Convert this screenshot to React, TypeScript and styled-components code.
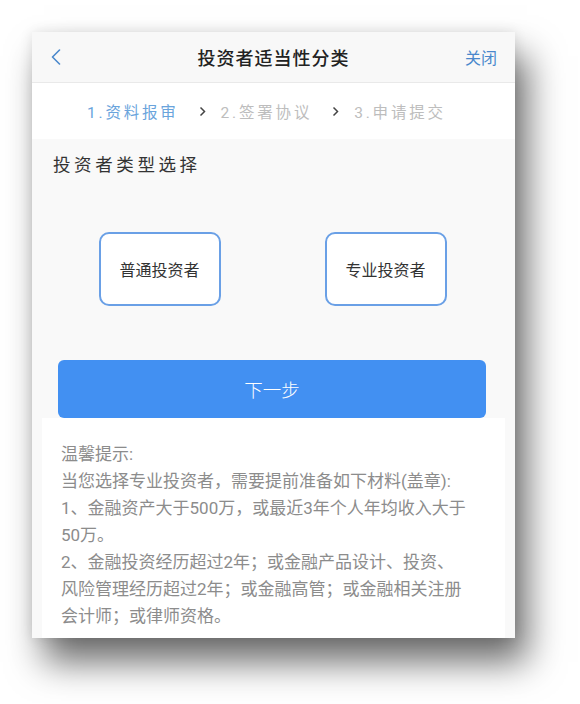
import styled, { createGlobalStyle } from "styled-components";

const GlobalStyle = createGlobalStyle`
  html, body {
    margin: 0;
    padding: 0;
    background: #ffffff;
  }
  body {
    font-family: Roboto, "Noto Sans CJK SC", sans-serif;
  }
`;

const steps = ["1.资料报审", "2.签署协议", "3.申请提交"];
const investorTypes = ["普通投资者", "专业投资者"];

export default function App() {
  return (
    <Page>
      <GlobalStyle />
      <Card>
        <Header>
          <BackButton aria-label="返回">
            <svg width="10" height="16" viewBox="0 0 10 16">
              <path
                d="M8.5 1 L1.5 8 L8.5 15"
                fill="none"
                stroke="#4a88cc"
                strokeWidth="1.6"
                strokeLinecap="round"
                strokeLinejoin="round"
              />
            </svg>
          </BackButton>
          <Title>投资者适当性分类</Title>
          <CloseLink>关闭</CloseLink>
        </Header>

        <StepBar>
          {steps.map((step, i) => (
            <StepItem key={step}>
              {i > 0 && (
                <StepArrow width="7" height="11" viewBox="0 0 7 11">
                  <path
                    d="M1.5 1.5 L5.5 5.5 L1.5 9.5"
                    fill="none"
                    stroke="#444"
                    strokeWidth="1.5"
                  />
                </StepArrow>
              )}
              <StepLabel active={i === 0}>{step}</StepLabel>
            </StepItem>
          ))}
        </StepBar>

        <Body>
          <SectionTitle>投资者类型选择</SectionTitle>
          <ChoiceRow>
            {investorTypes.map((t) => (
              <ChoiceBox key={t}>{t}</ChoiceBox>
            ))}
          </ChoiceRow>
          <NextButton>下一步</NextButton>
          <Tips>
            <TipText>
              <p>温馨提示:</p>
              <p>当您选择专业投资者，需要提前准备如下材料(盖章):</p>
              <p>1、金融资产大于500万，或最近3年个人年均收入大于50万。</p>
              <p>
                2、金融投资经历超过2年；或金融产品设计、投资、风险管理经历超过2年；或金融高管；或金融相关注册会计师；或律师资格。
              </p>
            </TipText>
          </Tips>
        </Body>
      </Card>
    </Page>
  );
}

const Page = styled.div`
  box-sizing: border-box;
  min-height: 704px;
  padding: 32px 0 0 32px;
  background: #ffffff;
`;

const Card = styled.div`
  width: 483px;
  height: 606px;
  display: flex;
  flex-direction: column;
  overflow: hidden;
  background: #f9f9f9;
  box-shadow: 12px 24px 34px rgba(0, 0, 0, 0.58), 0 0 12px rgba(0, 0, 0, 0.1);
`;

const Header = styled.div`
  height: 50px;
  display: grid;
  grid-template-columns: 1fr auto 1fr;
  align-items: center;
  background: #f8f8f8;
  border-bottom: 1px solid #e9e9e9;
`;

const BackButton = styled.button`
  justify-self: start;
  display: flex;
  align-items: center;
  padding: 0 0 0 19px;
  border: none;
  background: transparent;
`;

const Title = styled.div`
  font-size: 18px;
  font-weight: 500;
  letter-spacing: 1px;
  color: #222;
`;

const CloseLink = styled.div`
  justify-self: end;
  padding-right: 18px;
  font-size: 16px;
  color: #4a88cc;
`;

const StepBar = styled.div`
  height: 56px;
  display: flex;
  align-items: center;
  padding-left: 55px;
  background: #ffffff;
`;

const StepItem = styled.div`
  display: flex;
  align-items: center;
`;

const StepArrow = styled.svg`
  margin: 0 15px 0 20px;
`;

const StepLabel = styled.span<{ active: boolean }>`
  font-size: 15.5px;
  letter-spacing: 2.8px;
  color: ${(p) => (p.active ? "#6aa4dc" : "#bdbdbd")};
`;

const Body = styled.div`
  flex: 1;
  display: flex;
  flex-direction: column;
`;

const SectionTitle = styled.div`
  padding: 14px 0 0 21px;
  font-size: 17.5px;
  line-height: 24px;
  letter-spacing: 3.6px;
  color: #333;
`;

const ChoiceRow = styled.div`
  display: flex;
  justify-content: center;
  gap: 104px;
  margin-top: 55px;
  padding-right: 2px;
`;

const ChoiceBox = styled.div`
  width: 118px;
  height: 70px;
  display: flex;
  align-items: center;
  justify-content: center;
  border: 2px solid #6aa0e6;
  border-radius: 10px;
  background: #ffffff;
  font-size: 16px;
  color: #333;
`;

const NextButton = styled.button`
  height: 58px;
  margin: 54px 29px 0 26px;
  border: none;
  border-radius: 6px;
  background: #4290f2;
  color: #ffffff;
  font-family: inherit;
  font-size: 18.5px;
  font-weight: 300;
`;

const Tips = styled.div`
  flex: 1;
  margin: 0 10px;
  padding: 23px 0 0 19px;
  background: #ffffff;
`;

const TipText = styled.div`
  width: 407px;
  font-size: 17px;
  line-height: 27px;
  color: #8c8c8c;

  p {
    margin: 0;
  }
`;
